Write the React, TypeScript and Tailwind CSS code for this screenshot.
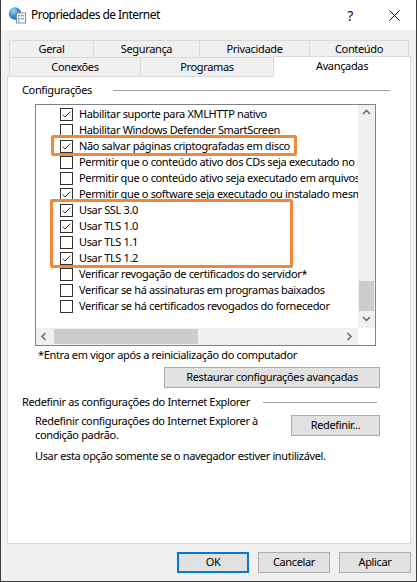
import React from 'react'

const rows: [boolean, string][] = [
  [true, 'Habilitar suporte para XMLHTTP nativo'],
  [false, 'Habilitar Windows Defender SmartScreen'],
  [true, 'Não salvar páginas criptografadas em disco'],
  [false, 'Permitir que o conteúdo ativo dos CDs seja executado no Meu Computador*'],
  [false, 'Permitir que o conteúdo ativo seja executado em arquivos do Meu Computador*'],
  [true, 'Permitir que o software seja executado ou instalado mesmo que a assinatura seja inválida'],
  [true, 'Usar SSL 3.0'],
  [true, 'Usar TLS 1.0'],
  [false, 'Usar TLS 1.1'],
  [true, 'Usar TLS 1.2'],
  [false, 'Verificar revogação de certificados do servidor*'],
  [false, 'Verificar se há assinaturas em programas baixados'],
  [false, 'Verificar se há certificados revogados do fornecedor'],
]

function Check({ on }: { on: boolean }) {
  return (
    <span className="w-[13px] h-[13px] border border-[#333333] bg-white shrink-0 flex items-center justify-center">
      {on && (
        <svg width="11" height="11" viewBox="0 0 11 11">
          <path d="M1.5 5.5 L4 8 L9.5 2.5" fill="none" stroke="#333333" strokeWidth="1" />
        </svg>
      )}
    </span>
  )
}

function Chevron({ dir }: { dir: 'up' | 'down' | 'left' | 'right' }) {
  const d = {
    up: 'M1 5 L4.5 1.5 L8 5',
    down: 'M1 2 L4.5 5.5 L8 2',
    left: 'M5.5 1 L2 4.5 L5.5 8',
    right: 'M2.5 1 L6 4.5 L2.5 8',
  }[dir]
  return (
    <svg width="9" height="9" viewBox="0 0 9 9">
      <path d={d} fill="none" stroke="#606060" strokeWidth="1.4" />
    </svg>
  )
}

function Btn({ label, w, def }: { label: string; w: string; def?: boolean }) {
  return (
    <div
      className={
        'h-[21px] bg-[#e1e1e1] flex items-center justify-center shrink-0 ' +
        w +
        (def ? ' border-2 border-[#0078d7]' : ' border border-[#adadad]')
      }
    >
      {label}
    </div>
  )
}

function IeIcon() {
  return (
    <svg width="18" height="18" viewBox="0 0 18 18" className="ml-[7px] shrink-0">
      <defs>
        <radialGradient id="g" cx="0.35" cy="0.3" r="0.8">
          <stop offset="0" stopColor="#bfe6ff" />
          <stop offset="0.45" stopColor="#3d95dc" />
          <stop offset="1" stopColor="#1a5ca8" />
        </radialGradient>
      </defs>
      <circle cx="7" cy="7.5" r="6.2" fill="url(#g)" />
      <path d="M3 5 Q5 3.5 6.5 5 Q5.5 7 3.5 7.5Z" fill="#7cc576" opacity="0.9" />
      <rect x="8.5" y="7" width="9" height="10" fill="#ffffff" stroke="#8a8a8a" strokeWidth="1" />
      <rect x="10" y="9" width="1.5" height="1.5" fill="#2e7bd0" />
      <rect x="12.5" y="9.3" width="3.5" height="1" fill="#7a7a7a" />
      <rect x="10" y="12" width="1.5" height="1.5" fill="#2e7bd0" />
      <rect x="12.5" y="12.3" width="3.5" height="1" fill="#7a7a7a" />
      <rect x="10" y="14.6" width="1.5" height="1" fill="#2e7bd0" />
    </svg>
  )
}

export default function App() {
  return (
    <div className="relative w-[417px] h-[582px] bg-[#f0f0f0] border-x border-b border-[#3c3c3c] flex flex-col overflow-hidden text-[11px] text-black tracking-[-0.35px] font-['Noto_Sans','Open_Sans',sans-serif]">
      {/* title bar */}
      <div className="h-[30px] bg-white flex items-center shrink-0">
        <IeIcon />
        <span className="ml-[5px] text-[12px] tracking-[-0.55px]">Propriedades de Internet</span>
        <span className="ml-auto mr-[36px] text-[14px] text-[#111]">?</span>
        <svg width="11" height="11" viewBox="0 0 11 11" className="mr-[16px]">
          <path d="M0.5 0.5 L10.5 10.5 M10.5 0.5 L0.5 10.5" stroke="#111" strokeWidth="1" />
        </svg>
      </div>

      {/* tabs */}
      <div className="mt-[10px] ml-[8px] flex h-[17px]">
        <div className="w-[84px] border-t border-l border-[#d9d9d9] flex items-center justify-center leading-[16px]">Geral</div>
        <div className="w-[106px] border-t border-l border-[#d9d9d9] flex items-center justify-center leading-[16px]">Segurança</div>
        <div className="w-[110px] border-t border-l border-[#d9d9d9] flex items-center justify-center leading-[16px]">Privacidade</div>
        <div className="w-[100px] border-t border-x border-[#d9d9d9] flex items-center justify-center leading-[16px]">Conteúdo</div>
      </div>
      <div className="ml-[8px] flex h-[19px] items-start">
        <div className="w-[131px] h-[19px] border-t border-l border-[#d9d9d9] flex items-center justify-center pt-[1px]">Conexões</div>
        <div className="w-[133px] h-[19px] border-t border-l border-[#d9d9d9] flex items-center justify-center pt-[1px]">Programas</div>
        <div className="relative z-10 w-[138px] h-[21px] -mt-[1px] bg-white border-t border-x border-[#d9d9d9] flex items-start justify-center pt-[1px]">Avançadas</div>
      </div>

      {/* panel */}
      <div className="ml-[6px] w-[404px] h-[468px] shrink-0 border border-[#d9d9d9] bg-white flex flex-col">
        <div className="mt-[5px] h-[16px] pl-[14px] flex items-center">
          <span className="w-[91px] shrink-0">Configurações</span>
          <div className="h-px flex-1 bg-[#a0a0a0] mr-[20px]" />
        </div>

        {/* list box */}
        <div className="mt-[6px] ml-[27px] w-[341px] h-[242px] shrink-0 border border-[#828282] bg-white flex flex-col">
          <div className="flex flex-1 min-h-0">
            <div className="flex-1 min-w-0 overflow-hidden pt-[1px]">
              {rows.map(([on, text], i) => (
                <div key={i} className="h-[16px] flex items-center pl-[24px] gap-[6px] whitespace-nowrap">
                  <Check on={on} />
                  <span>{text}</span>
                </div>
              ))}
            </div>
            <div className="w-[17px] bg-[#f0f0f0] flex flex-col shrink-0">
              <div className="h-[17px] flex items-center justify-center">
                <Chevron dir="up" />
              </div>
              <div className="flex-1 flex flex-col justify-end">
                <div className="h-[30px] mx-[1px] bg-[#cdcdcd]" />
              </div>
              <div className="h-[17px] flex items-center justify-center">
                <Chevron dir="down" />
              </div>
            </div>
          </div>
          <div className="h-[17px] flex shrink-0">
            <div className="flex-1 bg-[#f0f0f0] flex items-center">
              <div className="w-[17px] h-[17px] flex items-center justify-center">
                <Chevron dir="left" />
              </div>
              <div className="ml-[1px] w-[144px] h-[15px] bg-[#cdcdcd]" />
              <div className="ml-auto w-[17px] h-[17px] flex items-center justify-center">
                <Chevron dir="right" />
              </div>
            </div>
            <div className="w-[17px] bg-white" />
          </div>
        </div>

        <div className="mt-[1px] ml-[30px] h-[16px] flex items-center">*Entra em vigor após a reinicialização do computador</div>

        <div className="mt-[4px] ml-[156px]">
          <Btn label="Restaurar configurações avançadas" w="w-[216px]" />
        </div>

        <div className="mt-[6px] h-[16px] pl-[14px] flex items-center">
          <span className="w-[241px] shrink-0 whitespace-nowrap">Redefinir as configurações do Internet Explorer</span>
          <div className="h-px w-[114px] bg-[#a0a0a0]" />
        </div>

        <div className="mt-[4px] flex items-start">
          <div className="ml-[27px] leading-[14px] whitespace-nowrap">
            Redefinir configurações do Internet Explorer à
            <br />
            condição padrão.
          </div>
          <div className="ml-auto mr-[30px] mt-[1px]">
            <Btn label="Redefinir..." w="w-[89px]" />
          </div>
        </div>

        <div className="mt-[6px] ml-[27px] h-[16px] flex items-center">
          Usar esta opção somente se o navegador estiver inutilizável.
        </div>
      </div>

      {/* dialog buttons */}
      <div className="mt-[8px] mr-[5px] flex justify-end gap-[9px]">
        <Btn label="OK" w="w-[72px]" def />
        <Btn label="Cancelar" w="w-[72px]" />
        <Btn label="Aplicar" w="w-[72px]" />
      </div>

      {/* orange highlight annotations */}
      <div className="absolute left-[50px] top-[135px] w-[246px] h-[21px] border-[3px] border-[#f0883c] rounded-[2px]" />
      <div className="absolute left-[49px] top-[199px] w-[243px] h-[69px] border-[3px] border-[#f0883c] rounded-[2px]" />
    </div>
  )
}
